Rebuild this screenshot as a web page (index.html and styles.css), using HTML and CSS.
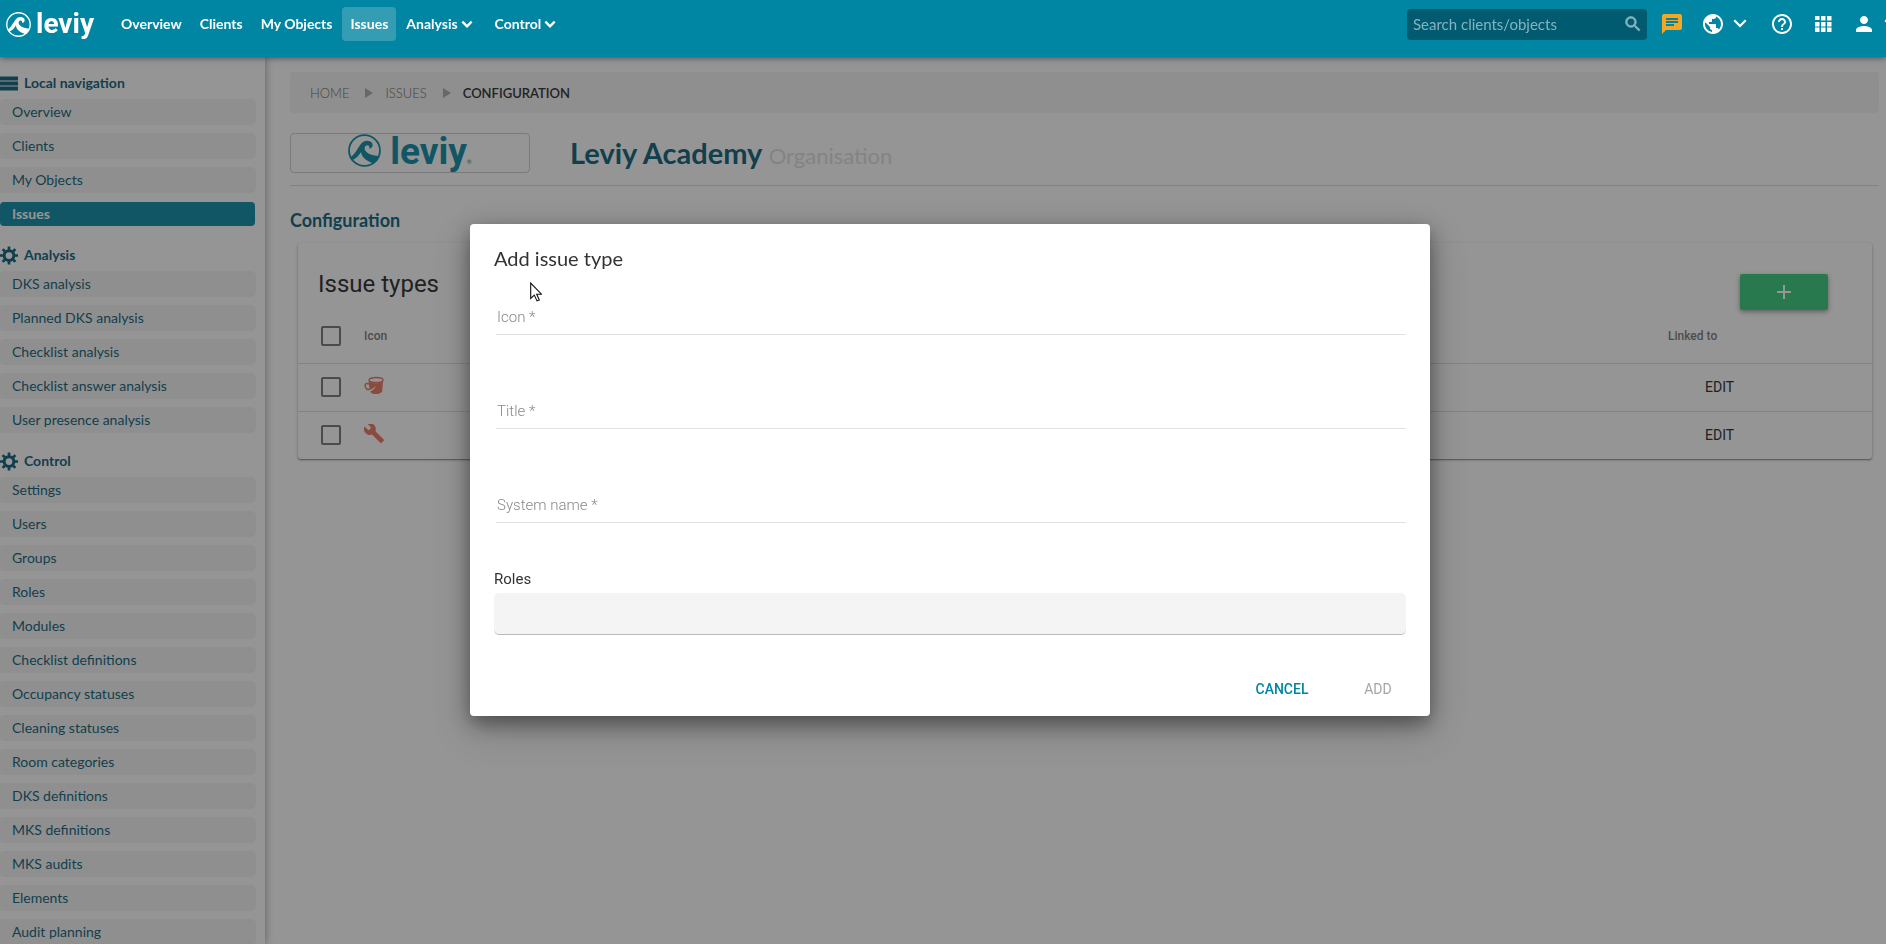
FILE: index.html
```html
<!DOCTYPE html>
<html lang="en">
<head>
<meta charset="utf-8">
<title>Leviy – Issue configuration</title>
<link rel="stylesheet" href="styles.css">
</head>
<body>
<svg class="defs" aria-hidden="true">
  <symbol id="mark" viewBox="0 0 48 48">
    <circle cx="24" cy="24" r="22.5" fill="none" stroke="currentColor" stroke-width="2.6"/>
    <path d="M3 34C10 30 14 20 19 14C23 9 31 8 35 13C37 17 35 21 31 21C32 17 29 15 26 17C21 21 26 31 45 32C43 38 39 42 36 42C29 40 20 35 19 26C15 32 12 36 5 38Z" fill="currentColor"/>
  </symbol>
  <symbol id="chevron" viewBox="0 0 24 24"><path d="M4 8l8 8 8-8" fill="none" stroke="currentColor" stroke-width="4"/></symbol>
  <symbol id="gear" viewBox="0 0 24 24">
    <circle cx="12" cy="12" r="6.500" fill="none" stroke="currentColor" stroke-width="4"/>
    <path d="M12 0v5M12 19v5M0 12h5M19 12h5M3.500 3.500l3.500 3.500M17 17l3.500 3.500M3.500 20.500l3.500-3.500M17 7l3.500-3.500" stroke="currentColor" stroke-width="3.600"/>
  </symbol>
</svg>
<header class="topbar">
  <a class="brand" href="#"><svg class="brand-mark"><use href="#mark"/></svg><span class="brand-name">leviy</span></a>
  <nav class="menu">
    <a href="#">Overview</a><a href="#">Clients</a><a href="#">My Objects</a><a class="current" href="#">Issues</a>
    <a class="drop" href="#">Analysis<svg class="caret"><use href="#chevron"/></svg></a>
    <a class="drop" href="#">Control<svg class="caret"><use href="#chevron"/></svg></a>
  </nav>
  <div class="search">
    <input type="search" aria-label="Search clients/objects" placeholder="Search clients/objects">
    <svg class="search-icon" viewBox="0 0 24 24"><path fill="currentColor" stroke="currentColor" stroke-width=".8" d="M15.500 14h-.79l-.28-.27A6.470 6.470 0 0 0 16 9.500 6.500 6.500 0 1 0 9.500 16c1.610 0 3.090-.59 4.230-1.570l.27.28v.79l5 4.990L20.490 19l-4.990-5zm-6 0C7.010 14 5 11.990 5 9.500S7.010 5 9.500 5 14 7.010 14 9.500 11.990 14 9.500 14z"/></svg>
  </div>
  <div class="tools">
    <button class="tool chat" aria-label="Chat"><svg viewBox="0 0 24 24"><path fill="currentColor" d="M20 2H4c-1.100 0-1.990.9-1.990 2L2 22l4-4h14c1.100 0 2-.9 2-2V4c0-1.100-.9-2-2-2zM6 9h12v2H6V9zm8 5H6v-2h8v2zm4-6H6V6h12v2z"/></svg></button>
    <button class="tool globe" aria-label="Language"><svg viewBox="0 0 24 24"><path fill="currentColor" d="M12 2C6.480 2 2 6.480 2 12s4.480 10 10 10 10-4.480 10-10S17.520 2 12 2zm-1 17.930c-3.950-.49-7-3.850-7-7.930 0-.62.080-1.210.21-1.790L9 15v1c0 1.100.9 2 2 2v1.930zm6.900-2.540c-.26-.81-1-1.390-1.900-1.390h-1v-3c0-.55-.45-1-1-1H8v-2h2c.55 0 1-.45 1-1V7h2c1.100 0 2-.9 2-2v-.41c2.930 1.190 5 4.060 5 7.410 0 2.080-.8 3.970-2.100 5.390z"/></svg><svg class="thin-caret" viewBox="0 0 24 24"><path fill="currentColor" d="M7.410 7.840 12 12.420l4.590-4.580L18 9.250l-6 6-6-6z"/></svg></button>
    <button class="tool" aria-label="Help"><svg viewBox="0 0 24 24"><path fill="currentColor" d="M11 18h2v-2h-2v2zm1-16C6.480 2 2 6.480 2 12s4.480 10 10 10 10-4.480 10-10S17.520 2 12 2zm0 18c-4.410 0-8-3.590-8-8s3.590-8 8-8 8 3.590 8 8-3.590 8-8 8zm0-14c-2.210 0-4 1.790-4 4h2c0-1.100.9-2 2-2s2 .9 2 2c0 2-3 1.750-3 5h2c0-2.250 3-2.500 3-5 0-2.210-1.790-4-4-4z"/></svg></button>
    <button class="tool" aria-label="Apps"><svg viewBox="0 0 24 24"><path fill="currentColor" d="M4 8h4.500V4H4v4zm6 12h4.500v-4.500H10V20zm-6 0h4.500v-4.500H4V20zm0-5.500h4.500V10H4v4.500zm6 0h4.500V10H10v4.500zM16 4v4.500h4.500V4H16zm-6 4.500h4.500V4H10v4.500zm6 6h4.500V10H16v4.500zm0 5.500h4.500v-4.500H16V20z"/></svg></button>
    <button class="tool user" aria-label="Account"><svg viewBox="0 0 24 24"><path fill="currentColor" d="M12 12c2.210 0 4-1.790 4-4s-1.790-4-4-4-4 1.790-4 4 1.790 4 4 4zm0 2c-2.670 0-8 1.340-8 4v2h16v-2c0-2.660-5.330-4-8-4z"/></svg><svg class="thin-caret" viewBox="0 0 24 24"><path fill="currentColor" d="M7.410 7.840 12 12.420l4.590-4.580L18 9.250l-6 6-6-6z"/></svg></button>
  </div>
</header>

<div class="page">
  <aside class="sidebar">
    <h2 class="side-title"><svg class="side-icon" viewBox="0 0 18 18"><path fill="currentColor" d="M0 2h18v4H0zM0 7h18v4H0zM0 12h18v4H0z"/></svg>Local navigation</h2>
    <nav class="side-list"><a href="#">Overview</a><a href="#">Clients</a><a href="#">My Objects</a><a class="active" href="#">Issues</a></nav>
    <h2 class="side-title"><svg class="side-icon"><use href="#gear"/></svg>Analysis</h2>
    <nav class="side-list"><a href="#">DKS analysis</a><a href="#">Planned DKS analysis</a><a href="#">Checklist analysis</a><a href="#">Checklist answer analysis</a><a href="#">User presence analysis</a></nav>
    <h2 class="side-title"><svg class="side-icon"><use href="#gear"/></svg>Control</h2>
    <nav class="side-list"><a href="#">Settings</a><a href="#">Users</a><a href="#">Groups</a><a href="#">Roles</a><a href="#">Modules</a><a href="#">Checklist definitions</a><a href="#">Occupancy statuses</a><a href="#">Cleaning statuses</a><a href="#">Room categories</a><a href="#">DKS definitions</a><a href="#">MKS definitions</a><a href="#">MKS audits</a><a href="#">Elements</a><a href="#">Audit planning</a></nav>
  </aside>
  <main class="content">
    <nav class="crumbs" aria-label="Breadcrumb"><a href="#">HOME</a><i class="sep"></i><a href="#">ISSUES</a><i class="sep"></i><strong>CONFIGURATION</strong></nav>
    <div class="org">
      <div class="org-logo"><svg class="org-mark"><use href="#mark"/></svg><span class="org-word">leviy</span><span class="reg">®</span></div>
      <h1>Leviy Academy <small>Organisation</small></h1>
    </div>
    <h2 class="section-title">Configuration</h2>
    <section class="card">
      <div class="card-head"><h3>Issue types</h3><button class="add" aria-label="Add issue type"><svg viewBox="0 0 16 16"><path d="M8 1v14M1 8h14" stroke="currentColor" stroke-width="2"/></svg></button></div>
      <table class="types">
        <thead><tr><th class="check"><input type="checkbox" aria-label="Select all"></th><th>Icon</th><th class="linked">Linked to</th></tr></thead>
        <tbody>
          <tr><td class="check"><input type="checkbox" aria-label="Select cleaning"></td><td><svg class="type-icon" viewBox="0 0 20 20"><ellipse cx="12" cy="4" rx="7" ry="2.500" fill="none" stroke="currentColor" stroke-width="1.400"/><path fill="currentColor" d="M4.500 5.500c4 2.400 11 2.400 14.500 0l-.8 9.500c-.4 3.500-10.500 4.500-12 .5 3-1 5-3.500 6-6-2 2-4 4-6.500 4.500z"/><path d="M5 8C2 6.500 1 8 1.200 10c.3 3 2.500 4 4.300 3" fill="none" stroke="currentColor" stroke-width="1.500"/></svg></td><td class="linked"><button class="edit">EDIT</button></td></tr>
          <tr><td class="check"><input type="checkbox" aria-label="Select maintenance"></td><td><svg class="type-icon" viewBox="1 2 22 22"><path fill="currentColor" d="M22.700 19l-9.100-9.100c.9-2.300.4-5-1.500-6.900-2-2-5-2.400-7.400-1.300L9 6 6 9 1.600 4.700C.4 7.100.9 10.100 2.900 12.100c1.900 1.900 4.600 2.400 6.900 1.500l9.100 9.100c.4.4 1 .4 1.400 0l2.300-2.300c.5-.4.5-1.100.1-1.400z"/></svg></td><td class="linked"><button class="edit">EDIT</button></td></tr>
        </tbody>
      </table>
    </section>
  </main>
</div>

<div class="backdrop">
  <form class="dialog" role="dialog" aria-labelledby="dialog-title">
    <h2 id="dialog-title">Add issue type</h2>
    <svg class="pointer" viewBox="0 0 12 20"><path d="M.7 1v15.500l3.600-3.400 2.700 5.800 2.300-1-2.600-5.700h4.800z" fill="#fff" stroke="#111" stroke-width="1.100"/></svg>
    <input class="field" type="text" aria-label="Icon" placeholder="Icon *">
    <input class="field" type="text" aria-label="Title" placeholder="Title *">
    <input class="field" type="text" aria-label="System name" placeholder="System name *">
    <label class="roles-label" for="roles">Roles</label>
    <input class="roles" id="roles" type="text">
    <div class="actions"><button type="button" class="cancel">CANCEL</button><button type="button" class="submit" disabled>ADD</button></div>
  </form>
</div>
</body>
</html>
```
FILE: styles.css
```css
* { box-sizing: border-box; }
html, body { height: 100%; }
body { margin: 0; overflow: hidden; display: flex; flex-direction: column; background: #fff; font-family: Lato, sans-serif; color: #222; }
a { color: inherit; text-decoration: none; }
h1, h2, h3 { margin: 0; }
button { border: 0; background: none; padding: 0; font: inherit; color: inherit; }
svg { flex: none; }
.defs { position: absolute; width: 0; height: 0; }

.topbar { position: relative; z-index: 3; flex: none; display: flex; align-items: flex-start; height: 57px; padding-top: 7px; padding-left: 6px; background: #0086a2; color: #fff; box-shadow: 0 1px 6px rgba(0, 0, 0, .5); }
.brand { display: flex; align-items: center; width: 107px; height: 34px; gap: 5px; }
.brand-mark { width: 25px; height: 25px; }
.brand-name { font: 700 28px/32px Roboto, sans-serif; }
.menu { display: flex; gap: 2px; font-size: 14px; font-weight: 700; line-height: 34px; }
.menu a { padding: 0 8px; border-radius: 4px; white-space: nowrap; }
.menu .current { background: #349cb3; }
.menu .drop { display: flex; align-items: center; padding-right: 11px; }
.caret { width: 14px; height: 14px; margin-left: 2px; }
.search { display: flex; align-items: center; width: 240px; height: 31px; margin: 2px 0 0 auto; padding: 0 4px 2px 6px; background: #005a70; border-radius: 4px; color: #86b3bf; }
.search input { flex: 1; min-width: 0; padding: 0; border: 0; outline: 0; background: none; color: inherit; font: 15px/20px Lato, sans-serif; }
.search input::placeholder { color: #86b3bf; opacity: 1; }
.search-icon { width: 20px; height: 20px; }
.tools { display: flex; align-items: center; height: 34px; width: 239px; padding-left: 13px; overflow: hidden; gap: 17px; flex: none; }
.tool { display: flex; align-items: center; flex: none; }
.tool svg { width: 24px; height: 24px; }
.tool .thin-caret { width: 26px; height: 26px; margin-left: 2px; }
.chat { color: #f5a623; }

.page { flex: 1; min-height: 0; display: flex; }
.sidebar { flex: none; width: 265px; padding-top: 6px; box-shadow: 1px 0 7px rgba(0, 0, 0, .35); color: #045a75; }
.side-title { display: flex; align-items: center; gap: 6px; height: 40px; padding-top: 8px; margin-top: -4px; font-size: 14px; font-weight: 700; line-height: 32px; }
.side-icon { width: 18px; height: 19px; }
.side-list { display: flex; flex-direction: column; gap: 8px; width: 257px; margin-left: -1px; padding-bottom: 8px; }
.side-list a { height: 26px; padding: 0 12px; border: 1px solid #f3f3f3; border-radius: 5px; background: #f3f3f3; font-size: 14px; line-height: 24px; }
.side-list .active { background: #0086a2; background-clip: padding-box; border-color: transparent; color: #fff; font-weight: 700; }

.content { flex: 1; min-width: 0; padding: 15px 7px 0 25px; }
.crumbs { display: flex; align-items: center; height: 41px; padding-left: 20px; background: #f3f3f3; border-radius: 4px; font-size: 13px; font-weight: 300; color: #666; }
.crumbs strong { font-weight: 600; color: #222; }
.sep { margin: 0 12px 0 16px; border: solid transparent; border-width: 5px 0 5px 8px; border-left-color: #aaa; }
.org { display: flex; align-items: flex-start; gap: 40px; margin-top: 20px; padding-bottom: 12px; border-bottom: 1px solid #ddd; }
.org-logo { display: flex; align-items: flex-start; justify-content: center; width: 240px; height: 40px; border: 1px solid #ccc; border-radius: 4px; color: #0086a2; }
.org-mark { width: 33px; height: 33px; }
.org-word { margin-left: 9px; font: 700 37px/36px Roboto, sans-serif; }
.reg { font-size: 6px; line-height: 56px; }
.org h1 { height: 40px; font-size: 29px; font-weight: 700; line-height: 40px; color: #045a75; }
.org small { font-size: 22px; font-weight: 400; color: #ddd; }
.section-title { margin-top: 22px; font-size: 18px; line-height: 24px; color: #045a75; }
.card { margin: 11px 7px 0 8px; border-radius: 3px; box-shadow: 0 1px 3px rgba(0, 0, 0, .3), 0 1px 1px rgba(0, 0, 0, .3); font-family: Roboto, sans-serif; }
.card-head { display: flex; justify-content: space-between; height: 66px; padding: 31px 44px 0 20px; }
.card-head h3 { font-size: 24px; font-weight: 400; line-height: 20px; }
.add { display: flex; align-items: center; justify-content: center; width: 88px; height: 36px; background: #2ecc77; color: #fff; border-radius: 2px; box-shadow: 0 2px 5px rgba(0, 0, 0, .4); }
.add svg { width: 16px; height: 16px; }
.types { width: 100%; border-collapse: collapse; table-layout: fixed; text-align: left; }
.types th { height: 54px; padding: 0; font-size: 12px; font-weight: 500; color: #757575; }
.types td { height: 48px; padding: 0; border-top: 1px solid #ddd; }
.types .check { width: 66px; padding-left: 23px; }
.types .linked { width: 204px; }
.types input { display: block; appearance: none; width: 20px; height: 20px; margin: 0; border: 2px solid #757070; border-radius: 2px; }
.type-icon { display: block; width: 20px; height: 20px; margin-bottom: 2px; color: #e8705c; }
.edit { margin-left: 37px; font: 400 14px/36px Roboto, sans-serif; }

.backdrop { position: fixed; inset: 57px 0 0; z-index: 2; display: flex; align-items: flex-start; justify-content: center; padding: 167px 0 0 14px; background: rgba(33, 33, 33, .48); }
.dialog { position: relative; display: flex; flex-direction: column; width: 960px; padding: 20px 24px 9px; background: #fff; border-radius: 4px; box-shadow: 0 7px 20px rgba(0, 0, 0, .4), 0 14px 40px rgba(0, 0, 0, .2); font-family: Roboto, sans-serif; color: #333; }
.dialog h2 { font: 400 20px/28px Lato, sans-serif; }
.field { height: 36px; margin: 25px 0 33px 2px; padding: 0 1px; border: 0; border-bottom: 1px solid #e2e2e2; outline: 0; background: none; font: 300 15px/20px Roboto, sans-serif; }
.dialog h2 + .pointer + .field { margin-top: 27px; }
.field::placeholder { color: #888; opacity: 1; }
.roles-label { margin-top: 13px; font-size: 15px; line-height: 20px; }
.roles { height: 42px; margin-top: 4px; border: 0; border-bottom: 1px solid #b8bcbe; border-radius: 5px; background: #f4f4f4; outline: 0; }
.actions { display: flex; justify-content: flex-end; gap: 8px; margin: 36px -16px 0 0; font-size: 14px; font-weight: 500; line-height: 36px; }
.actions button { min-width: 88px; height: 36px; text-align: center; }
.cancel { color: #0086a2; }
.actions .submit { font-weight: 400; color: #a6a6a6; }
.pointer { position: absolute; left: 60px; top: 58px; width: 12px; height: 20px; }
```
